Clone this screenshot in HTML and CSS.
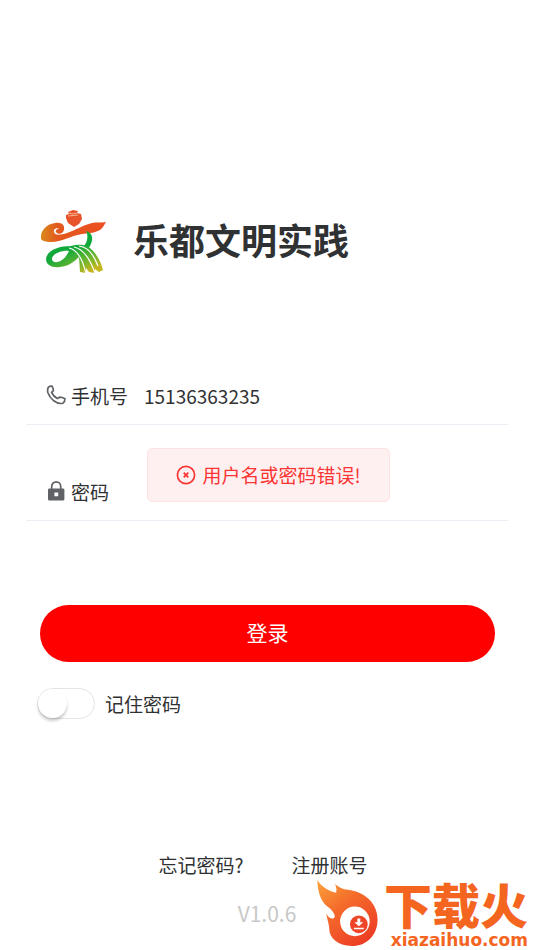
FILE: index.html
```html
<!DOCTYPE html>
<html lang="zh-CN">
<head>
<meta charset="utf-8">
<meta name="viewport" content="width=device-width, initial-scale=1">
<title>乐都文明实践</title>
<link rel="stylesheet" href="styles.css">
</head>
<body>
<main class="page">
  <header class="brand">
    <svg class="brand-logo" viewBox="0 0 66 66" aria-hidden="true">
      <defs>
        <linearGradient id="ribbon" x1="0" x2="1"><stop offset="0" stop-color="#d88a1c"/><stop offset=".25" stop-color="#e2591f"/><stop offset="1" stop-color="#ee4f20"/></linearGradient>
        <linearGradient id="field" x1="0" y1="0" x2="1" y2="1"><stop offset=".3" stop-color="#12a93c"/><stop offset=".62" stop-color="#6db52e"/><stop offset=".85" stop-color="#c4b61e"/></linearGradient>
      </defs>
      <path fill="#e9532a" d="M26 7l3-1-1-2 5-2 5 1-1 2 4 1 1 5-3 5-5 3-6-4-2-5z"/>
      <path d="M29 5q4 2 8 0M28 8l10-1" fill="none" stroke="#f6b48e"/>
      <path fill="url(#ribbon)" d="M1 31c-1-8 5-15 14-16 7-1 10 2 9 7-1 4-6 5-8 2-1-2 1-3 3-3-2-2-6 0-5 3 1 4 7 3 13 1 9-3 16-8 25-10 4-1 8 0 14-1l-3 5c-4 6-14 6-21 7-12 2-20 8-31 8-5 0-9-1-10-3z"/>
      <path fill="#12a93c" d="M46 23c8 2 7 10 4 15-2 4-5 6-7 9l-9-2c6-4 12-7 13-13 1-4 0-7-1-9z"/>
      <path fill="url(#field)" d="M31 38c9-3 18-1 23 6 5 6 8 13 9 18l-4 2-4-3 0 4-6-1-3-4 0 5-6-1-1-15c-5 5-10 9-19 10-8 1-14-2-14-8 1-9 13-13 25-13z"/>
      <path fill="#fff" d="M29 43c-7-1-17 3-17 8 0 4 6 4 10 1 3-2 5-5 7-9z"/>
      <path fill="none" stroke="#fff" stroke-width="1.200" d="M29 40c9 2 14 12 17 26M34 39c10 2 16 12 21 26M39 38c9 1 15 9 19 20"/>
    </svg>
    <h1 class="brand-title">乐都文明实践</h1>
  </header>

  <form class="login">
    <div class="field">
      <svg class="field-icon" viewBox="0 0 20 20" aria-hidden="true">
        <path fill="none" stroke="#606266" stroke-width="1.700" stroke-linejoin="round" d="M2.400 2.200Q4 .8 6 1.200Q7.400 3.200 7.400 5.600L5.600 7.400Q7.200 11.400 11.400 13.600L13.400 12.200Q16.400 12.200 19 13.800Q19 16.600 17 18.200Q12.600 19.400 7.800 15.800Q3.400 12.200 1.800 7.400Q1.200 4 2.400 2.200z"/>
      </svg>
      <label class="field-label" for="phone">手机号</label>
      <input class="field-input" id="phone" type="tel" value="15136363235">
    </div>
    <div class="field">
      <svg class="field-icon" viewBox="0 0 20 20" aria-hidden="true">
        <path fill="none" stroke="#606266" stroke-width="1.700" d="M5.700 9V5.400a4.500 4.500 0 0 1 9 0V9"/>
        <path fill="#606266" fill-rule="evenodd" d="M3.400 7.600h13.600q1.400 0 1.400 1.400v9q0 1.600-1.400 1.600H3.400q-1.400 0-1.400-1.600V9q0-1.400 1.400-1.400zM8.400 11.500v3.800h3.800v-3.800z"/>
      </svg>
      <label class="field-label" for="password">密码</label>
      <input class="field-input" id="password" type="password">
      <div class="toast" role="alert">
        <svg class="toast-icon" viewBox="0 0 20 20" aria-hidden="true">
          <circle cx="10" cy="10" r="8.600" fill="none" stroke="currentColor" stroke-width="1.700"/>
          <path d="M7.700 7.700l4.600 4.600M12.300 7.700l-4.600 4.600" stroke="currentColor" stroke-width="1.800"/>
        </svg>
        <span>用户名或密码错误!</span>
      </div>
    </div>
    <button class="submit" type="submit">登录</button>
    <label class="remember"><input class="switch" type="checkbox"><span>记住密码</span></label>
  </form>

  <footer class="footer">
    <nav class="links"><a href="#forgot">忘记密码?</a><a href="#register">注册账号</a></nav>
    <p class="version">V1.0.6</p>
  </footer>

  <aside class="mark">
    <svg class="mark-flame" viewBox="0 0 62 68" aria-hidden="true">
      <defs><linearGradient id="flame" x1="0" y1="0" x2=".7" y2="1"><stop offset="0" stop-color="#fba33a"/><stop offset=".45" stop-color="#f46b2b"/><stop offset="1" stop-color="#ed3d25"/></linearGradient></defs>
      <path fill="url(#flame)" d="M0 0C4 7 11 11 19 13Q20 9 18 4Q23 9 31 10C48 12 61 24 61 40C61 56 50 67 35 67C20 67 12 58 12 50C12 45 10 41 9 34Q12 40 16 39C20 38 16 31 10 27C3 21 0 11 0 0z"/>
      <circle cx="38" cy="42" r="15" fill="#fff"/>
      <circle cx="42" cy="45" r="9" fill="#ee4528"/>
      <path fill="#fff" d="M40.500 39h3v4h3L42 47l-4.500-4h3zM37 48.500h10v1.500H37z"/>
    </svg>
    <div class="mark-text">
      <span class="mark-name">下载火</span>
      <span class="mark-site">xiazaihuo.com</span>
    </div>
  </aside>
</main>
</body>
</html>
```
FILE: styles.css
```css
* {
  box-sizing: border-box;
}

body {
  margin: 0;
  background: #fff;
  color: #303133;
  font-family: "Noto Sans CJK SC", sans-serif;
  font-size: 19px;
  line-height: 28px;
}

.page {
  position: relative;
  display: flex;
  flex-direction: column;
  min-height: 100vh;
  padding: 208px 26px 23px;
}

.brand {
  display: flex;
  align-items: flex-start;
  gap: 27px;
  padding-left: 14px;
}

.brand-logo {
  width: 66px;
  height: 66px;
}

.brand-title {
  margin: 0;
  font-size: 36px;
  line-height: 63px;
  font-weight: 700;
}

.login {
  display: flex;
  flex-direction: column;
  margin-top: 55px;
}

.field {
  position: relative;
  display: flex;
  align-items: flex-end;
  height: 96px;
  padding: 0 20px 14px;
  border-bottom: 1px solid #ebeef5;
}

.field-icon {
  width: 20px;
  height: 20px;
  margin: 0 5px 5px 0;
}

.field-input {
  flex: 1;
  min-width: 0;
  height: 28px;
  margin-left: 16px;
  padding: 0;
  border: 0;
  outline: 0;
  background: transparent;
  color: inherit;
  font: inherit;
}

.toast {
  position: absolute;
  left: 25%;
  bottom: 18px;
  display: flex;
  align-items: center;
  gap: 7px;
  padding: 12px 28px;
  border: 1px solid #fde2e2;
  border-radius: 5px;
  background: #fef0f0;
  color: #fa3534;
  white-space: nowrap;
}

.toast-icon {
  width: 20px;
  height: 20px;
}

.submit {
  height: 57px;
  margin: 84px 13px 0 14px;
  padding: 0 0 3px;
  border: 0;
  border-radius: 29px;
  background: #f00;
  color: #fff;
  font: inherit;
  font-size: 21px;
}

.remember {
  display: flex;
  align-items: center;
  align-self: flex-start;
  gap: 10px;
  margin: 26px 0 0 11px;
}

.switch {
  appearance: none;
  width: 58px;
  height: 31px;
  margin: 0;
  border: 1px solid #e4e4e4;
  border-radius: 16px;
  background: #fff;
}

.switch::before {
  content: "";
  display: block;
  width: 29px;
  height: 29px;
  border-radius: 50%;
  background: #fff;
  box-shadow: 0 3px 3px rgba(0, 0, 0, 0.2);
}

.switch:checked {
  background: #f00;
}

.switch:checked::before {
  margin-left: 27px;
}

.footer {
  margin-top: auto;
  text-align: center;
}

.links {
  display: flex;
  justify-content: center;
  gap: 48px;
  padding-right: 8px;
}

.links a {
  color: inherit;
  text-decoration: none;
}

.version {
  margin: 20px 0 0;
  color: #c8c8c8;
  font-size: 21px;
}

.mark {
  position: absolute;
  right: 6px;
  bottom: 0;
  display: flex;
  align-items: flex-end;
  gap: 5px;
  color: #f4651f;
}

.mark-flame {
  width: 62px;
  height: 67px;
  margin-bottom: 3px;
}

.mark-text {
  display: flex;
  flex-direction: column;
  align-items: flex-end;
}

.mark-name {
  margin-bottom: 4px;
  font-size: 48px;
  line-height: 46px;
  font-weight: 900;
}

.mark-site {
  font-family: "DejaVu Sans", sans-serif;
  font-size: 17px;
  line-height: 20px;
  font-weight: 700;
}
```
